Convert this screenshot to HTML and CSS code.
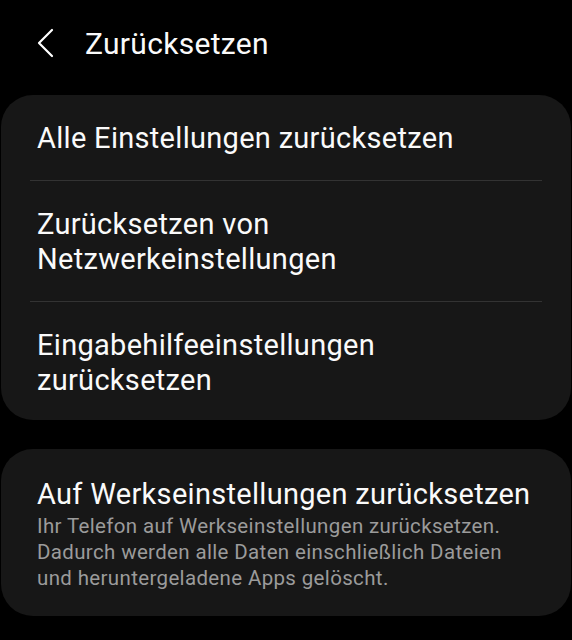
FILE: index.html
```html
<!DOCTYPE html>
<html>
<head>
  <meta charset="UTF-8">
  <title>Zurücksetzen</title>
  <link rel="stylesheet" href="styles.css">
</head>
<body>
  <div class="header">
    <svg class="back" width="20" height="30" viewBox="0 0 20 30">
      <path d="M15 2 L2 15 L15 28" fill="none" stroke="#fff" stroke-width="2.2" stroke-linecap="round" stroke-linejoin="round"/>
    </svg>
    <h1>Zurücksetzen</h1>
  </div>

  <div class="card">
    <div class="item">Alle Einstellungen zurücksetzen</div>
    <div class="divider"></div>
    <div class="item">Zurücksetzen von<br>Netzwerkeinstellungen</div>
    <div class="divider"></div>
    <div class="item last">Eingabehilfeeinstellungen<br>zurücksetzen</div>
  </div>

  <div class="card">
    <div class="item factory">
      Auf Werkseinstellungen zurücksetzen
      <div class="sub">Ihr Telefon auf Werkseinstellungen zurücksetzen. Dadurch werden alle Daten einschließlich Dateien und heruntergeladene Apps gelöscht.</div>
    </div>
  </div>
</body>
</html>
```

FILE: styles.css
```css
body {
  margin: 0;
  background: #000;
  color: #fafafa;
  font-family: Roboto, 'Noto Sans', sans-serif;
  width: 572px;
}

.header {
  display: flex;
  align-items: center;
  height: 86px;
  padding-left: 37px;
}

.back {
  display: block;
  margin-right: 28px;
}

h1 {
  margin: 0;
  font-size: 30px;
  font-weight: 400;
  letter-spacing: 0.3px;
}

.card {
  background: #171717;
  border-radius: 32px;
  margin: 9px 1px 29px;
}

.item {
  font-size: 29px;
  line-height: 35px;
  letter-spacing: 0.3px;
  padding: 26px 36px 24px;
}

.item.last {
  padding-bottom: 22px;
}

.divider {
  height: 1px;
  background: #333;
  margin: 0 29px;
}

.item.factory {
  padding: 28px 36px 25px;
}

.sub {
  color: #9b9b9b;
  font-size: 20.5px;
  line-height: 26px;
  letter-spacing: 0.35px;
  margin-top: 1px;
  width: 490px;
}
```
